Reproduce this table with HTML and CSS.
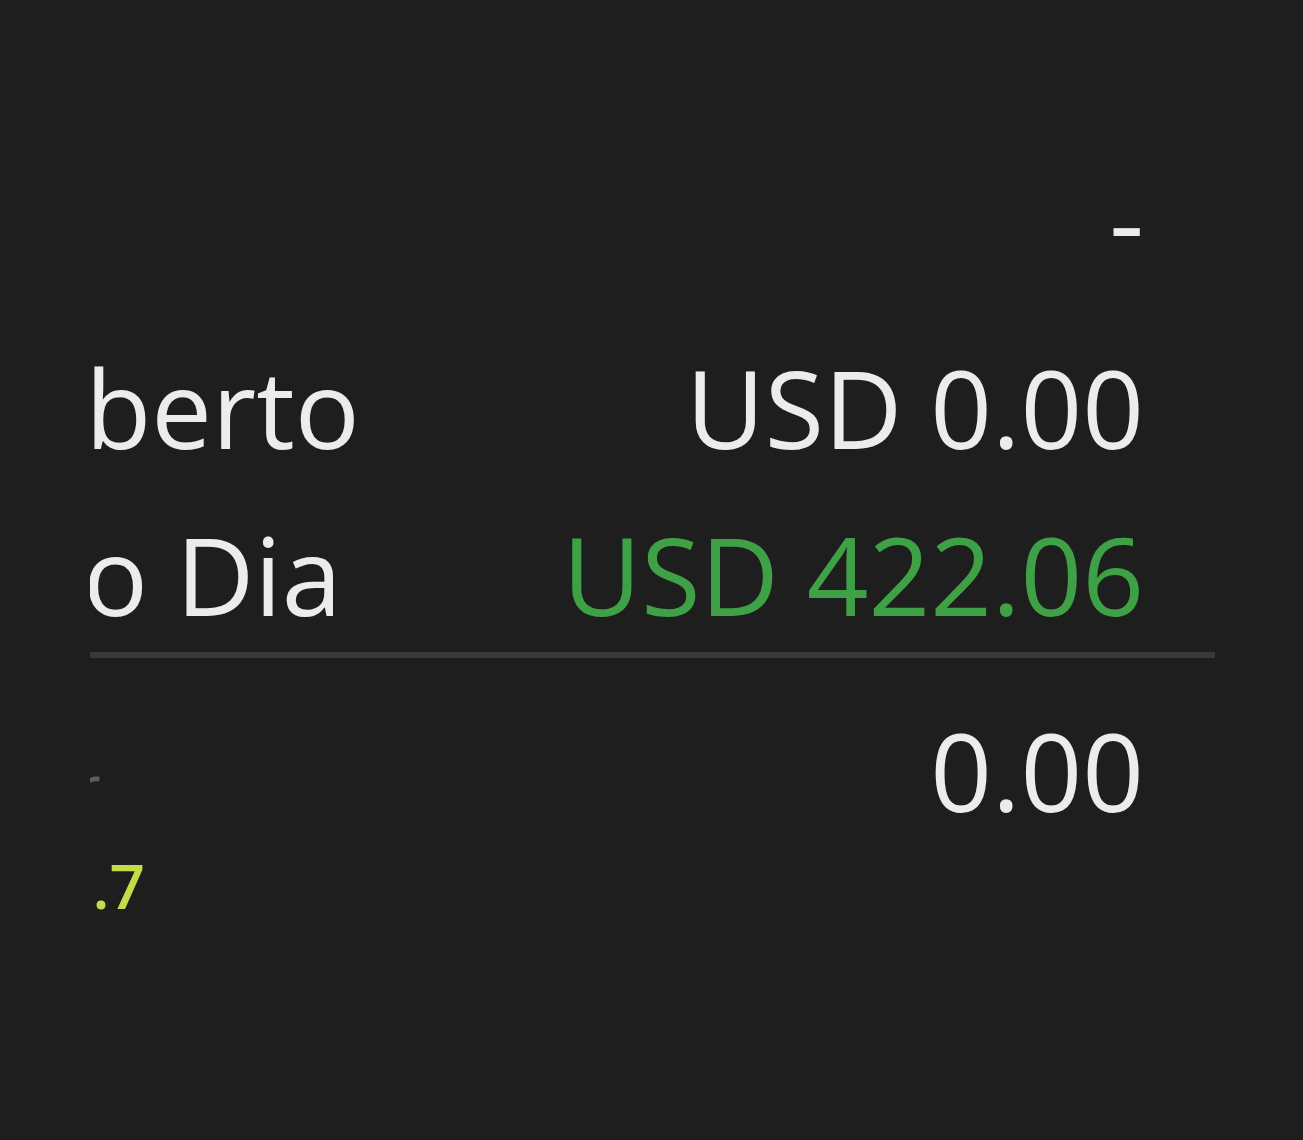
FILE: index.html
```html
<!DOCTYPE html>
<html lang="pt">
<head>
  <meta charset="UTF-8">
  <meta name="viewport" content="width=device-width, initial-scale=1.0">
  <title>Resumo da Conta</title>
  <link rel="stylesheet" href="styles.css">
</head>
<body>

  <div class="panel">
    <div class="row head">
      <span class="label">Total</span>
      <span class="value">-</span>
    </div>

    <div class="row">
      <span class="label">P/L Aberto</span>
      <span class="value">USD 0.00</span>
    </div>

    <div class="row">
      <span class="label">P/L do Dia</span>
      <span class="value up">USD 422.06</span>
    </div>

    <hr class="divider">

    <div class="row stats">
      <div class="meta">
        <span class="metaLabel">Valor</span>
        <span class="metaValue">0.7</span>
      </div>
      <span class="value">0.00</span>
    </div>
  </div>

</body>
</html>
```

FILE: styles.css
```css
body {
  margin: 0;
  background-color: #1e1e1e;
  font-family: "Open Sans", "Noto Sans", sans-serif;
  color: #ececec;
}

.panel {
  display: flex;
  flex-direction: column;
  box-sizing: border-box;
  width: 1125px;
  margin-left: 90px;
  padding-top: 166px;
  padding-right: 71px;
  height: 1140px;
  overflow: hidden;
}

.row {
  display: flex;
  justify-content: space-between;
  align-items: flex-start;
  font-size: 108px;
  line-height: 108px;
  white-space: nowrap;
}

.row + .row {
  margin-top: 59px;
}

.head {
  margin-bottom: 21px;
}

.label {
  margin-left: -262px;
}

.value.up {
  color: #3fa145;
}

.divider {
  border: none;
  height: 6px;
  background-color: #383838;
  margin: 23px -71px 55px 0;
}

.stats .value {
  margin-top: 4px;
}

.meta {
  display: flex;
  flex-direction: column;
  margin-top: 42px;
  font-size: 62px;
  line-height: 62px;
}

.metaLabel {
  margin-left: -139px;
  color: #5e5e5e;
}

.metaValue {
  margin-top: 37px;
  margin-left: -33px;
  color: #c5dc4a;
  font-weight: 600;
}
```
